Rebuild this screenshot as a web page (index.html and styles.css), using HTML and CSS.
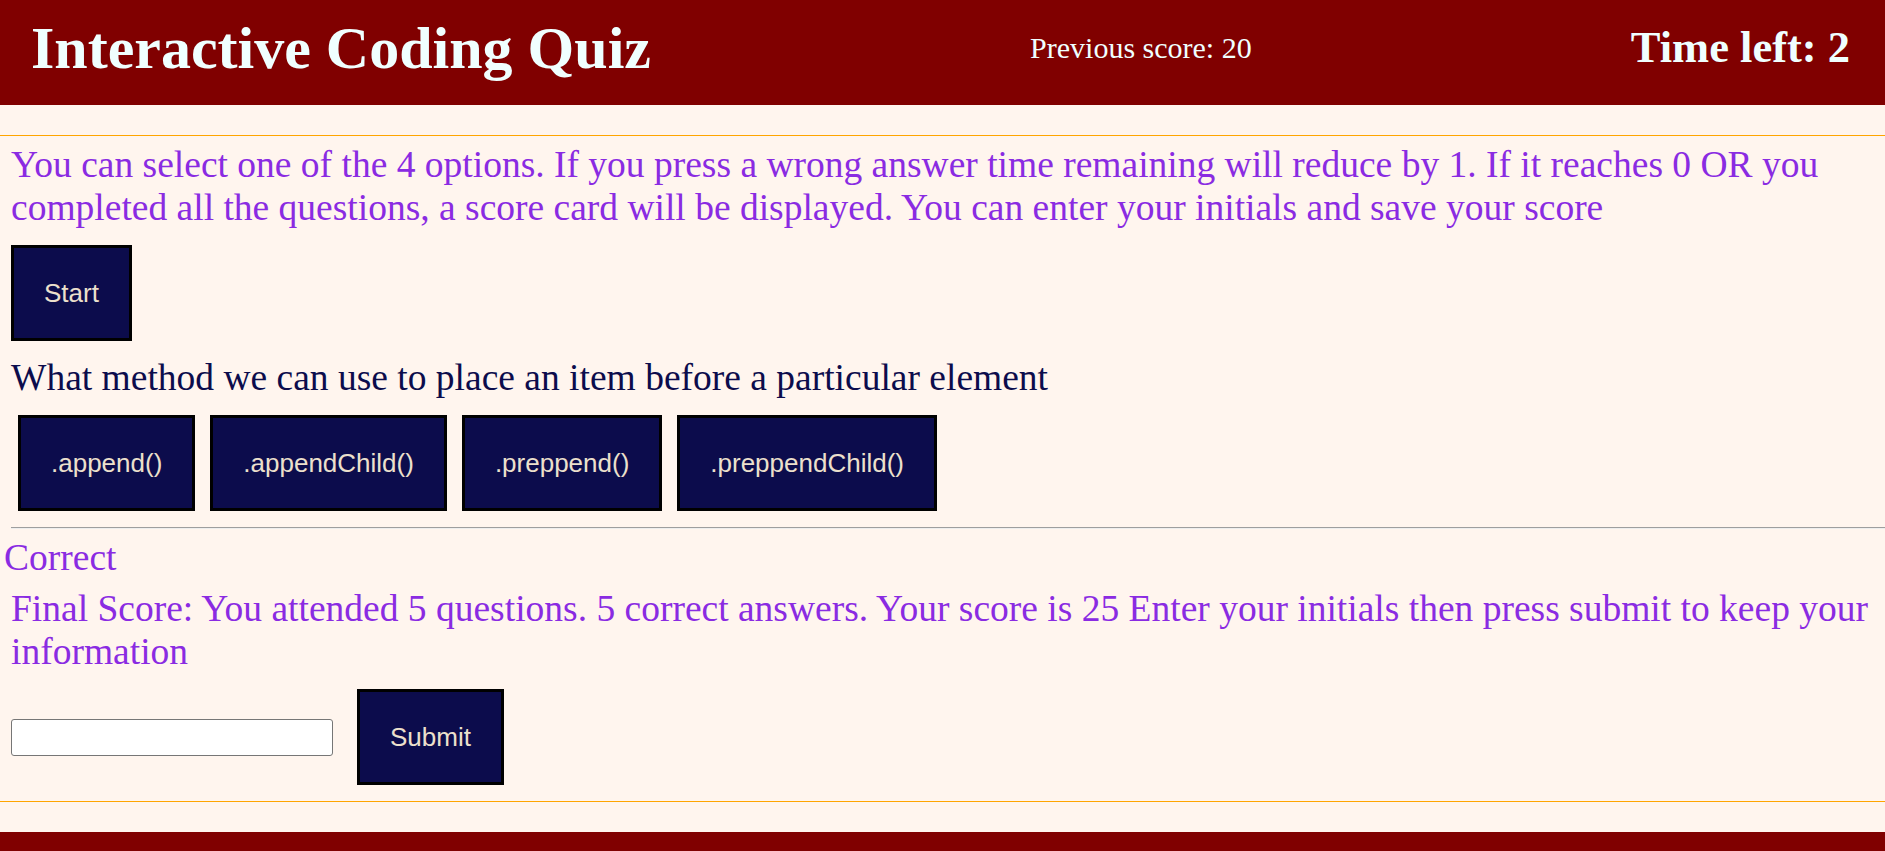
FILE: index.html
```html
<!DOCTYPE html>
<html lang="en">
<head>
<meta charset="utf-8">
<title>Interactive Coding Quiz</title>
<link rel="stylesheet" href="styles.css">
</head>
<body>
<header class="topbar">
  <h1 class="title">Interactive Coding Quiz</h1>
  <p class="prev-score">Previous score: 20</p>
  <p class="timer">Time left: 2</p>
</header>
<main class="quiz">
  <p class="intro">You can select one of the 4 options. If you press a wrong answer time remaining will reduce by 1. If it reaches 0 OR you completed all the questions, a score card will be displayed. You can enter your initials and save your score</p>
  <button class="btn start-btn">Start</button>
  <p class="question">What method we can use to place an item before a particular element</p>
  <div class="answers">
    <button class="btn">.append()</button>
    <button class="btn">.appendChild()</button>
    <button class="btn">.preppend()</button>
    <button class="btn">.preppendChild()</button>
  </div>
  <hr class="divider">
  <p class="result">Correct</p>
  <p class="final">Final Score: You attended 5 questions. 5 correct answers. Your score is 25 Enter your initials then press submit to keep your information</p>
  <div class="save-row">
    <input class="initials" type="text">
    <button class="btn">Submit</button>
  </div>
</main>
<footer class="bottombar"></footer>
</body>
</html>
```

FILE: styles.css
```css
html, body {
  margin: 0;
  padding: 0;
}

body {
  background: #fff5ee;
  font-family: "Liberation Serif", "Times New Roman", serif;
}

.topbar {
  height: 105px;
  box-sizing: border-box;
  padding: 0 35px 10px 31px;
  background: #800000;
  color: #f0ffff;
  display: flex;
  justify-content: space-between;
  align-items: center;
}

.title {
  margin: 0;
  font-size: 60px;
  font-weight: bold;
  line-height: 66px;
}

.prev-score {
  margin: 0;
  font-size: 30px;
  line-height: 33px;
}

.timer {
  margin: 0;
  font-size: 44.5px;
  font-weight: bold;
  line-height: 49px;
}

.quiz {
  margin: 30px 0;
  border-top: 1px solid #ffa500;
  border-bottom: 1px solid #ffa500;
  padding: 7px 0 16px;
  display: flex;
  flex-direction: column;
  align-items: flex-start;
  font-size: 37.5px;
  line-height: 43px;
}

.intro {
  margin: 0 0 0 11px;
  color: #8a2be2;
}

.btn {
  font-family: "Liberation Sans", Arial, sans-serif;
  font-size: 26px;
  line-height: 30px;
  padding: 30px;
  background: #0c0c4c;
  color: #ece0cc;
  border: 3px solid #000;
  border-radius: 0;
  margin: 0;
}

.start-btn {
  margin: 16px 0 0 11px;
}

.question {
  margin: 15px 0 0 11px;
  color: #0c0c4c;
}

.answers {
  margin: 16px 0 0 18px;
  display: flex;
  gap: 15px;
}

.divider {
  align-self: stretch;
  margin: 16px 0 0 11px;
  height: 0;
  border: none;
  border-top: 1px solid #9e9e9e;
  border-bottom: 1px solid #eeeeee;
}

.result {
  margin: 7px 0 0 4px;
  color: #8a2be2;
}

.final {
  margin: 8px 0 0 11px;
  color: #8a2be2;
}

.save-row {
  margin: 16px 0 0 11px;
  display: flex;
  align-items: center;
  gap: 24px;
}

.initials {
  width: 322px;
  height: 37px;
  box-sizing: border-box;
  margin: 0;
  padding: 1px 4px;
  border: 1px solid #767676;
  border-radius: 3px;
  background: #fff;
}

.bottombar {
  height: 60px;
  background: #800000;
}
```
